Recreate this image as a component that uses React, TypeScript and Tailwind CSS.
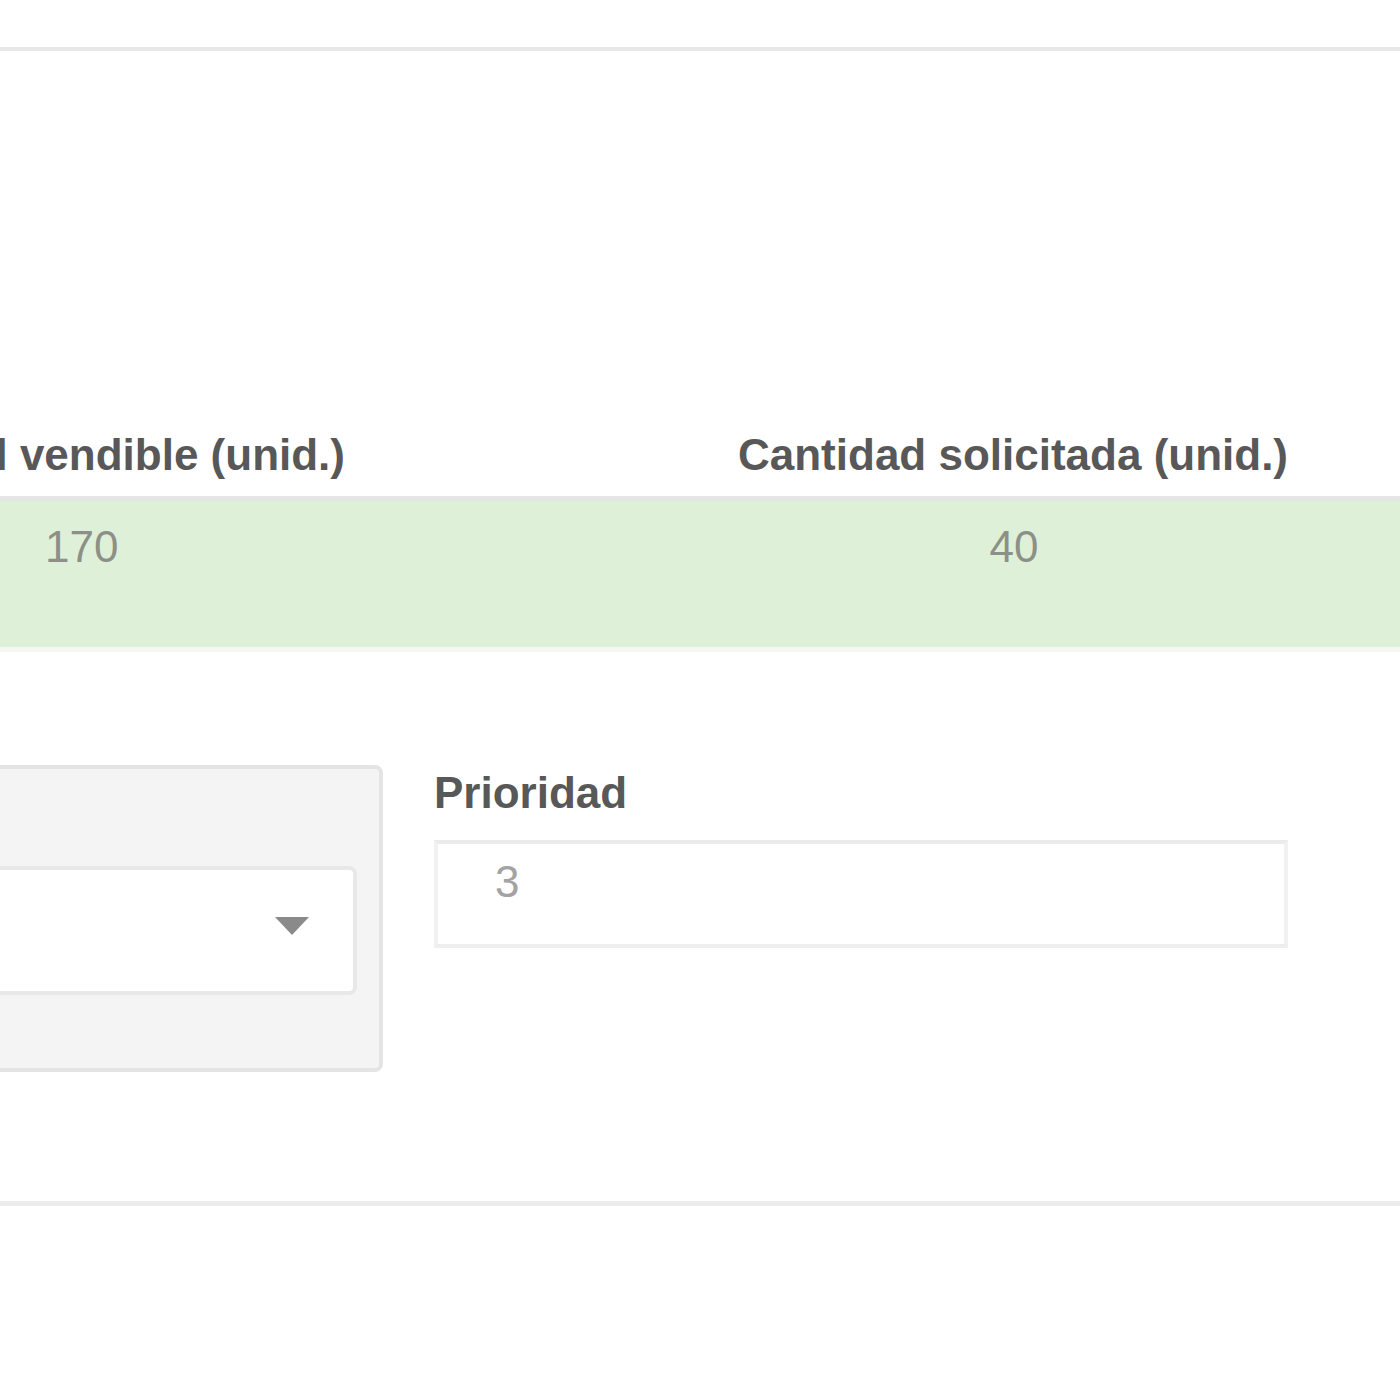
export default function App() {
  return (
    <div className="w-[1400px] h-[1400px] bg-white overflow-hidden font-['Liberation_Sans',Arial,sans-serif]">
      {/* top rule */}
      <div className="h-[47px]" />
      <div className="h-[4px] bg-[#e7e7e7]" />

      {/* ── Table ─────────────────────────────────────────── */}
      <div className="mt-[382px]">
        <div className="flex h-[68px] border-b-[5px] border-[#e6e6e6] pb-[19px] text-[44px] leading-[44px] font-bold text-[#585858]">
          <div className="w-[345px] shrink-0 flex justify-end whitespace-nowrap">
            <span>Stock total vendible (unid.)</span>
          </div>
          <div className="ml-[393px] whitespace-nowrap">Cantidad solicitada (unid.)</div>
        </div>
        <div className="flex h-[146px] bg-[#dff0d8] pt-[24px] text-[44px] leading-[44px] text-[#8c9088]">
          <div className="pl-[45px] w-[738px] shrink-0">170</div>
          <div className="w-[552px] text-center">40</div>
        </div>
        <div className="h-[5px] bg-[#f4f8f3]" />
      </div>

      {/* ── Form row ──────────────────────────────────────── */}
      <div className="mt-[113px] flex">
        <div className="ml-[-60px] w-[443px] h-[307px] shrink-0 rounded-[8px] border-[4px] border-[#e4e4e4] bg-[#f4f4f4] pt-[97px] pr-[22px]">
          <div className="h-[129px] rounded-[8px] border-[4px] border-[#e8e8e8] bg-white flex items-center justify-end pr-[44px]">
            <svg width="34" height="18" viewBox="0 0 34 18" className="mb-[10px]">
              <polygon points="0,0 34,0 17,18" fill="#8a8a8a" />
            </svg>
          </div>
        </div>

        <div className="ml-[51px] w-[854px]">
          <div className="mt-[6px] text-[44px] leading-[44px] font-bold text-[#585858]">Prioridad</div>
          <div className="mt-[25px] h-[108px] border-[4px] border-[#ebebeb] border-x-[#f1f1f1] border-b-[#eeeeee] bg-white pl-[57px] pt-[16px] text-[44px] leading-[44px] text-[#a3a3a3]">
            3
          </div>
        </div>
      </div>

      {/* bottom rule */}
      <div className="mt-[129px] h-[5px] bg-[#ececec]" />
    </div>
  )
}
